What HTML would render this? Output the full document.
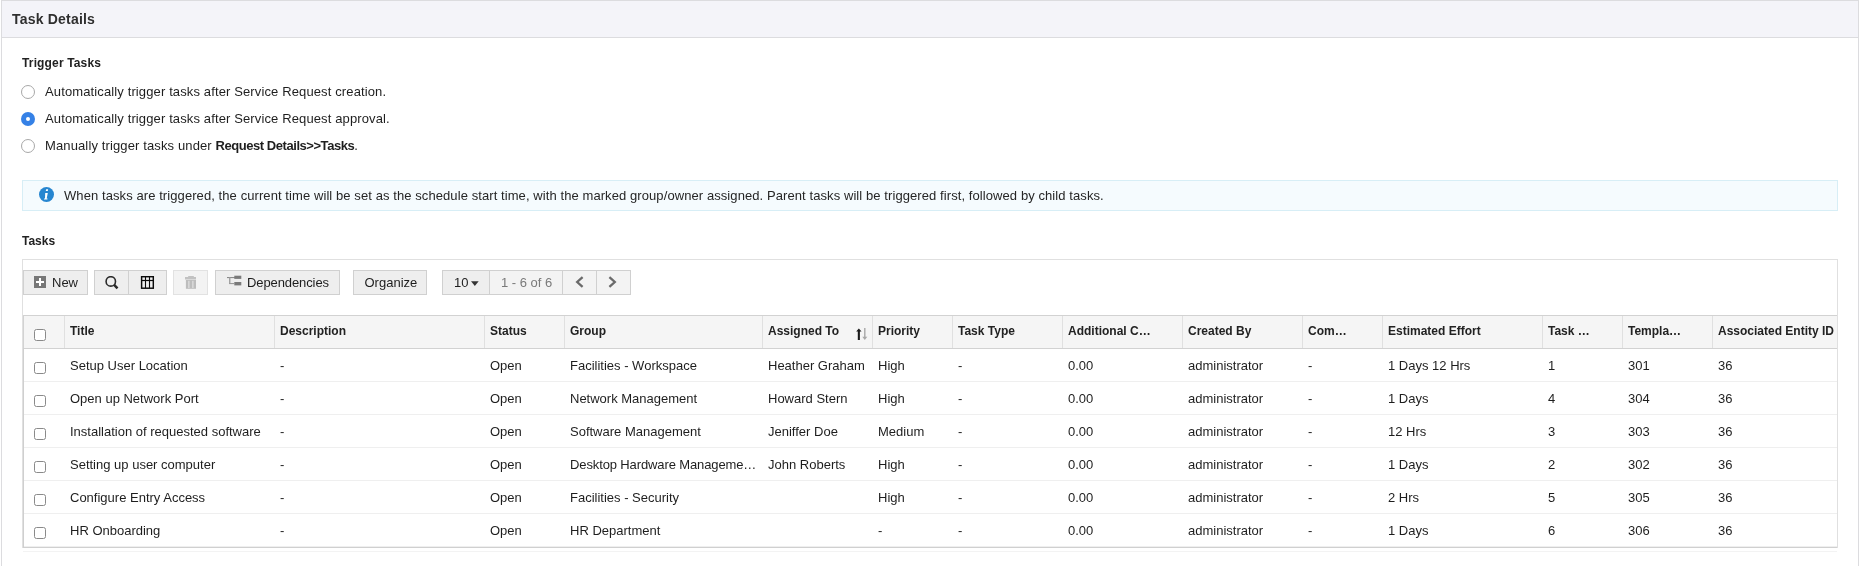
<!DOCTYPE html>
<html><head><meta charset="utf-8"><title>Task Details</title>
<style>
html,body{margin:0;padding:0;background:#fff;width:1859px;height:566px;overflow:hidden;position:relative}
body{font-family:"Liberation Sans", sans-serif;}
.t{position:absolute;white-space:nowrap;font-family:"Liberation Sans", sans-serif;}
</style></head><body>
<div id="w" style="position:absolute;left:0;top:0;width:1859px;height:566px;will-change:transform">
<div style="position:absolute;left:1px;top:0;width:1858px;height:600px;box-sizing:border-box;border:1px solid #dcdcdf;border-bottom:none;background:#fff"></div>
<div style="position:absolute;left:2px;top:1px;width:1856px;height:36px;background:#f4f4f9;border-bottom:1px solid #dcdcdf"></div>
<div class="t" style="left:12px;top:11.35px;font-size:14px;line-height:16px;color:#2f2f2f;font-weight:bold;letter-spacing:0.2px;">Task Details</div>
<div class="t" style="left:22px;top:54.84px;font-size:12px;line-height:16px;color:#222;font-weight:bold;letter-spacing:0.15px;">Trigger Tasks</div>
<div style="position:absolute;left:21px;top:85px;width:14px;height:14px;box-sizing:border-box;border-radius:50%;border:1px solid #a8a8a8;background:#fff"></div>
<div class="t" style="left:45px;top:83.70px;font-size:13px;line-height:16px;color:#1e1e1e;letter-spacing:0.125px;">Automatically trigger tasks after Service Request creation.</div>
<div style="position:absolute;left:21px;top:112px;width:14px;height:14px;border-radius:50%;background:#3581e6"></div>
<div style="position:absolute;left:26px;top:117px;width:4px;height:4px;border-radius:50%;background:#fff"></div>
<div class="t" style="left:45px;top:110.70px;font-size:13px;line-height:16px;color:#1e1e1e;letter-spacing:0.125px;">Automatically trigger tasks after Service Request approval.</div>
<div style="position:absolute;left:21px;top:139px;width:14px;height:14px;box-sizing:border-box;border-radius:50%;border:1px solid #a8a8a8;background:#fff"></div>
<div class="t" style="left:45px;top:137.70px;font-size:13px;line-height:16px;color:#1e1e1e;letter-spacing:0.125px;">Manually trigger tasks under <b style="letter-spacing:-0.45px">Request Details&gt;&gt;Tasks</b>.</div>
<div style="position:absolute;left:22px;top:180px;width:1816px;height:31px;box-sizing:border-box;background:#f5fbfe;border:1px solid #d7eef6"></div>
<svg style="position:absolute;left:39px;top:187px" width="15" height="15" viewBox="0 0 15 15"><circle cx="7.5" cy="7.5" r="7.5" fill="#2786d0"/><path d="M6.2 6.1 L8.8 6.1 L7.7 11.5 L8.6 11.5 L8.4 12.6 L4.9 12.6 L5.1 11.5 L6.0 11.5 Z" fill="#fff"/><path d="M7.1 2.2 H9.1 L8.8 4.1 H6.8 Z" fill="#fff"/></svg>
<div class="t" style="left:64px;top:187.70px;font-size:13px;line-height:16px;color:#262626;letter-spacing:0.083px;">When tasks are triggered, the current time will be set as the schedule start time, with the marked group/owner assigned. Parent tasks will be triggered first, followed by child tasks.</div>
<div class="t" style="left:22px;top:233.14px;font-size:12px;line-height:16px;color:#222;font-weight:bold;">Tasks</div>
<div style="position:absolute;left:22px;top:259px;width:1816px;height:289px;box-sizing:border-box;border:1px solid #e0e0e0;border-bottom:none"></div>
<div style="position:absolute;left:23px;top:270px;width:65px;height:25px;box-sizing:border-box;background:#eeeeee;border:1px solid #d0d0d0;"></div>
<div style="position:absolute;left:34px;top:276px;width:12px;height:12px;background:#777"></div>
<div style="position:absolute;left:38.75px;top:278px;width:2.5px;height:8px;background:#fff"></div>
<div style="position:absolute;left:36px;top:280.75px;width:8px;height:2.5px;background:#fff"></div>
<div class="t" style="left:52px;top:274.50px;font-size:13px;line-height:16px;color:#1e1e1e;">New</div>
<div style="position:absolute;left:94px;top:270px;width:35px;height:25px;box-sizing:border-box;background:#eeeeee;border:1px solid #d0d0d0;"></div>
<div style="position:absolute;left:128px;top:270px;width:39px;height:25px;box-sizing:border-box;background:#eeeeee;border:1px solid #d0d0d0;"></div>
<svg style="position:absolute;left:104px;top:276px" width="15" height="14" viewBox="0 0 15 14"><circle cx="6.8" cy="5.4" r="4.7" fill="none" stroke="#2a2a2a" stroke-width="1.6"/><line x1="9.9" y1="8.7" x2="13.5" y2="12.4" stroke="#2a2a2a" stroke-width="2.5" stroke-linecap="butt"/></svg>
<svg style="position:absolute;left:140px;top:276px" width="15" height="14" viewBox="0 0 15 14"><rect x="1.6" y="0.7" width="11.7" height="11.5" fill="none" stroke="#0a0a0a" stroke-width="1.45"/><line x1="1.7" y1="4.5" x2="13.2" y2="4.5" stroke="#0a0a0a" stroke-width="1.2"/><line x1="5.5" y1="0.8" x2="5.5" y2="12" stroke="#0a0a0a" stroke-width="1.1"/><line x1="9.5" y1="0.8" x2="9.5" y2="12" stroke="#0a0a0a" stroke-width="1.1"/></svg>
<div style="position:absolute;left:173px;top:270px;width:35px;height:25px;box-sizing:border-box;background:#f3f3f3;border:1px solid #e2e2e2;"></div>
<svg style="position:absolute;left:184px;top:275px" width="14" height="15" viewBox="0 0 14 15"><path d="M4 1.6 Q4 1 5 1 H9 Q10 1 10 1.6 V2 H12 V4.4 H1 V2 H4 Z" fill="#c2c2c2"/><rect x="1.9" y="5" width="10.1" height="8.8" fill="#bdbdbd"/><rect x="4.4" y="5.8" width="1" height="7.2" fill="#e8e8e8"/><rect x="8.4" y="5.8" width="1" height="7.2" fill="#e8e8e8"/></svg>
<div style="position:absolute;left:215px;top:270px;width:125px;height:25px;box-sizing:border-box;background:#eeeeee;border:1px solid #d0d0d0;"></div>
<svg style="position:absolute;left:227px;top:275px" width="15" height="12" viewBox="0 0 15 12"><rect x="0" y="2" width="8" height="1.1" fill="#8a8a8a"/><rect x="2.1" y="2" width="1.3" height="7" fill="#999"/><rect x="2.1" y="8" width="5" height="1.1" fill="#999"/><rect x="7.3" y="0.7" width="7" height="3.2" fill="#7a7a7a"/><rect x="7.3" y="7" width="7" height="3.4" fill="#7a7a7a"/></svg>
<div class="t" style="left:247px;top:274.50px;font-size:13px;line-height:16px;color:#1e1e1e;letter-spacing:-0.1px;">Dependencies</div>
<div style="position:absolute;left:353px;top:270px;width:74px;height:25px;box-sizing:border-box;background:#eeeeee;border:1px solid #d0d0d0;"></div>
<div class="t" style="left:364.5px;top:274.50px;font-size:13px;line-height:16px;color:#1e1e1e;">Organize</div>
<div style="position:absolute;left:442px;top:270px;width:48px;height:25px;box-sizing:border-box;background:#eeeeee;border:1px solid #d0d0d0;"></div>
<div class="t" style="left:454px;top:274.50px;font-size:13px;line-height:16px;color:#1e1e1e;">10</div>
<svg style="position:absolute;left:471px;top:281px" width="8" height="5" viewBox="0 0 8 5"><path d="M0 0.2 L7.7 0.2 L3.85 4.9 Z" fill="#333"/></svg>
<div style="position:absolute;left:489px;top:270px;width:74px;height:25px;box-sizing:border-box;background:#f3f3f3;border:1px solid #d0d0d0;"></div>
<div class="t" style="left:501px;top:274.50px;font-size:13px;line-height:16px;color:#7a7a7a;">1 - 6 of 6</div>
<div style="position:absolute;left:562px;top:270px;width:35px;height:25px;box-sizing:border-box;background:#f3f3f3;border:1px solid #d0d0d0;"></div>
<svg style="position:absolute;left:574px;top:276px" width="10" height="12" viewBox="0 0 10 12"><path d="M8.6 1.2 L3.2 6 L8.6 10.8" fill="none" stroke="#6a6a6a" stroke-width="2.3"/></svg>
<div style="position:absolute;left:596px;top:270px;width:35px;height:25px;box-sizing:border-box;background:#f3f3f3;border:1px solid #d0d0d0;"></div>
<svg style="position:absolute;left:608px;top:276px" width="10" height="12" viewBox="0 0 10 12"><path d="M1.4 1.2 L6.8 6 L1.4 10.8" fill="none" stroke="#6a6a6a" stroke-width="2.3"/></svg>
<div style="position:absolute;left:23px;top:315px;width:1814px;height:34px;box-sizing:border-box;background:#f5f5f5;border-top:1px solid #d2d2d2;border-bottom:1px solid #d2d2d2;border-left:1px solid #d2d2d2"></div>
<div style="position:absolute;left:64px;top:316px;width:1px;height:32px;background:#e0e0e0"></div>
<div style="position:absolute;left:274px;top:316px;width:1px;height:32px;background:#e0e0e0"></div>
<div style="position:absolute;left:484px;top:316px;width:1px;height:32px;background:#e0e0e0"></div>
<div style="position:absolute;left:564px;top:316px;width:1px;height:32px;background:#e0e0e0"></div>
<div style="position:absolute;left:762px;top:316px;width:1px;height:32px;background:#e0e0e0"></div>
<div style="position:absolute;left:872px;top:316px;width:1px;height:32px;background:#e0e0e0"></div>
<div style="position:absolute;left:952px;top:316px;width:1px;height:32px;background:#e0e0e0"></div>
<div style="position:absolute;left:1062px;top:316px;width:1px;height:32px;background:#e0e0e0"></div>
<div style="position:absolute;left:1182px;top:316px;width:1px;height:32px;background:#e0e0e0"></div>
<div style="position:absolute;left:1302px;top:316px;width:1px;height:32px;background:#e0e0e0"></div>
<div style="position:absolute;left:1382px;top:316px;width:1px;height:32px;background:#e0e0e0"></div>
<div style="position:absolute;left:1542px;top:316px;width:1px;height:32px;background:#e0e0e0"></div>
<div style="position:absolute;left:1622px;top:316px;width:1px;height:32px;background:#e0e0e0"></div>
<div style="position:absolute;left:1712px;top:316px;width:1px;height:32px;background:#e0e0e0"></div>
<div class="t" style="left:70px;top:322.64px;font-size:12px;line-height:16px;color:#222;font-weight:bold;">Title</div>
<div class="t" style="left:280px;top:322.64px;font-size:12px;line-height:16px;color:#222;font-weight:bold;">Description</div>
<div class="t" style="left:490px;top:322.64px;font-size:12px;line-height:16px;color:#222;font-weight:bold;">Status</div>
<div class="t" style="left:570px;top:322.64px;font-size:12px;line-height:16px;color:#222;font-weight:bold;">Group</div>
<div class="t" style="left:768px;top:322.64px;font-size:12px;line-height:16px;color:#222;font-weight:bold;">Assigned To</div>
<div class="t" style="left:878px;top:322.64px;font-size:12px;line-height:16px;color:#222;font-weight:bold;">Priority</div>
<div class="t" style="left:958px;top:322.64px;font-size:12px;line-height:16px;color:#222;font-weight:bold;">Task Type</div>
<div class="t" style="left:1068px;top:322.64px;font-size:12px;line-height:16px;color:#222;font-weight:bold;">Additional C…</div>
<div class="t" style="left:1188px;top:322.64px;font-size:12px;line-height:16px;color:#222;font-weight:bold;">Created By</div>
<div class="t" style="left:1308px;top:322.64px;font-size:12px;line-height:16px;color:#222;font-weight:bold;">Com…</div>
<div class="t" style="left:1388px;top:322.64px;font-size:12px;line-height:16px;color:#222;font-weight:bold;">Estimated Effort</div>
<div class="t" style="left:1548px;top:322.64px;font-size:12px;line-height:16px;color:#222;font-weight:bold;">Task …</div>
<div class="t" style="left:1628px;top:322.64px;font-size:12px;line-height:16px;color:#222;font-weight:bold;">Templa…</div>
<div class="t" style="left:1718px;top:322.64px;font-size:12px;line-height:16px;color:#222;font-weight:bold;">Associated Entity ID</div>
<svg style="position:absolute;left:855px;top:327px" width="14" height="14" viewBox="0 0 14 14"><rect x="2.8" y="3" width="2.1" height="10" fill="#1a1a1a"/><path d="M1.2 4.6 L3.85 1.5 L6.5 4.6 Z" fill="#1a1a1a"/><rect x="9.1" y="1" width="1.4" height="10" fill="#a8a8a8"/><path d="M7.3 9.8 L9.8 12.9 L12.3 9.8 Z" fill="#a8a8a8"/></svg>
<div style="position:absolute;left:34px;top:329px;width:12px;height:12px;box-sizing:border-box;border:1px solid #8a8a8a;border-radius:2.5px;background:#fff"></div>
<div style="position:absolute;left:23px;top:348px;width:1px;height:200px;background:#cfcfcf"></div>
<div style="position:absolute;left:24px;top:381px;width:1813px;height:1px;background:#efefef"></div>
<div style="position:absolute;left:34px;top:362px;width:12px;height:12px;box-sizing:border-box;border:1px solid #8a8a8a;border-radius:2.5px;background:#fff"></div>
<div class="t" style="left:70px;top:358.00px;font-size:13px;line-height:16px;color:#1e1e1e;">Setup User Location</div>
<div class="t" style="left:280px;top:358.00px;font-size:13px;line-height:16px;color:#1e1e1e;">-</div>
<div class="t" style="left:490px;top:358.00px;font-size:13px;line-height:16px;color:#1e1e1e;">Open</div>
<div class="t" style="left:570px;top:358.00px;font-size:13px;line-height:16px;color:#1e1e1e;">Facilities - Workspace</div>
<div class="t" style="left:768px;top:358.00px;font-size:13px;line-height:16px;color:#1e1e1e;">Heather Graham</div>
<div class="t" style="left:878px;top:358.00px;font-size:13px;line-height:16px;color:#1e1e1e;">High</div>
<div class="t" style="left:958px;top:358.00px;font-size:13px;line-height:16px;color:#1e1e1e;">-</div>
<div class="t" style="left:1068px;top:358.00px;font-size:13px;line-height:16px;color:#1e1e1e;">0.00</div>
<div class="t" style="left:1188px;top:358.00px;font-size:13px;line-height:16px;color:#1e1e1e;">administrator</div>
<div class="t" style="left:1308px;top:358.00px;font-size:13px;line-height:16px;color:#1e1e1e;">-</div>
<div class="t" style="left:1388px;top:358.00px;font-size:13px;line-height:16px;color:#1e1e1e;">1 Days 12 Hrs</div>
<div class="t" style="left:1548px;top:358.00px;font-size:13px;line-height:16px;color:#1e1e1e;">1</div>
<div class="t" style="left:1628px;top:358.00px;font-size:13px;line-height:16px;color:#1e1e1e;">301</div>
<div class="t" style="left:1718px;top:358.00px;font-size:13px;line-height:16px;color:#1e1e1e;">36</div>
<div style="position:absolute;left:24px;top:414px;width:1813px;height:1px;background:#efefef"></div>
<div style="position:absolute;left:34px;top:395px;width:12px;height:12px;box-sizing:border-box;border:1px solid #8a8a8a;border-radius:2.5px;background:#fff"></div>
<div class="t" style="left:70px;top:391.00px;font-size:13px;line-height:16px;color:#1e1e1e;">Open up Network Port</div>
<div class="t" style="left:280px;top:391.00px;font-size:13px;line-height:16px;color:#1e1e1e;">-</div>
<div class="t" style="left:490px;top:391.00px;font-size:13px;line-height:16px;color:#1e1e1e;">Open</div>
<div class="t" style="left:570px;top:391.00px;font-size:13px;line-height:16px;color:#1e1e1e;">Network Management</div>
<div class="t" style="left:768px;top:391.00px;font-size:13px;line-height:16px;color:#1e1e1e;">Howard Stern</div>
<div class="t" style="left:878px;top:391.00px;font-size:13px;line-height:16px;color:#1e1e1e;">High</div>
<div class="t" style="left:958px;top:391.00px;font-size:13px;line-height:16px;color:#1e1e1e;">-</div>
<div class="t" style="left:1068px;top:391.00px;font-size:13px;line-height:16px;color:#1e1e1e;">0.00</div>
<div class="t" style="left:1188px;top:391.00px;font-size:13px;line-height:16px;color:#1e1e1e;">administrator</div>
<div class="t" style="left:1308px;top:391.00px;font-size:13px;line-height:16px;color:#1e1e1e;">-</div>
<div class="t" style="left:1388px;top:391.00px;font-size:13px;line-height:16px;color:#1e1e1e;">1 Days</div>
<div class="t" style="left:1548px;top:391.00px;font-size:13px;line-height:16px;color:#1e1e1e;">4</div>
<div class="t" style="left:1628px;top:391.00px;font-size:13px;line-height:16px;color:#1e1e1e;">304</div>
<div class="t" style="left:1718px;top:391.00px;font-size:13px;line-height:16px;color:#1e1e1e;">36</div>
<div style="position:absolute;left:24px;top:447px;width:1813px;height:1px;background:#efefef"></div>
<div style="position:absolute;left:34px;top:428px;width:12px;height:12px;box-sizing:border-box;border:1px solid #8a8a8a;border-radius:2.5px;background:#fff"></div>
<div class="t" style="left:70px;top:424.00px;font-size:13px;line-height:16px;color:#1e1e1e;">Installation of requested software</div>
<div class="t" style="left:280px;top:424.00px;font-size:13px;line-height:16px;color:#1e1e1e;">-</div>
<div class="t" style="left:490px;top:424.00px;font-size:13px;line-height:16px;color:#1e1e1e;">Open</div>
<div class="t" style="left:570px;top:424.00px;font-size:13px;line-height:16px;color:#1e1e1e;">Software Management</div>
<div class="t" style="left:768px;top:424.00px;font-size:13px;line-height:16px;color:#1e1e1e;">Jeniffer Doe</div>
<div class="t" style="left:878px;top:424.00px;font-size:13px;line-height:16px;color:#1e1e1e;">Medium</div>
<div class="t" style="left:958px;top:424.00px;font-size:13px;line-height:16px;color:#1e1e1e;">-</div>
<div class="t" style="left:1068px;top:424.00px;font-size:13px;line-height:16px;color:#1e1e1e;">0.00</div>
<div class="t" style="left:1188px;top:424.00px;font-size:13px;line-height:16px;color:#1e1e1e;">administrator</div>
<div class="t" style="left:1308px;top:424.00px;font-size:13px;line-height:16px;color:#1e1e1e;">-</div>
<div class="t" style="left:1388px;top:424.00px;font-size:13px;line-height:16px;color:#1e1e1e;">12 Hrs</div>
<div class="t" style="left:1548px;top:424.00px;font-size:13px;line-height:16px;color:#1e1e1e;">3</div>
<div class="t" style="left:1628px;top:424.00px;font-size:13px;line-height:16px;color:#1e1e1e;">303</div>
<div class="t" style="left:1718px;top:424.00px;font-size:13px;line-height:16px;color:#1e1e1e;">36</div>
<div style="position:absolute;left:24px;top:480px;width:1813px;height:1px;background:#efefef"></div>
<div style="position:absolute;left:34px;top:461px;width:12px;height:12px;box-sizing:border-box;border:1px solid #8a8a8a;border-radius:2.5px;background:#fff"></div>
<div class="t" style="left:70px;top:457.00px;font-size:13px;line-height:16px;color:#1e1e1e;">Setting up user computer</div>
<div class="t" style="left:280px;top:457.00px;font-size:13px;line-height:16px;color:#1e1e1e;">-</div>
<div class="t" style="left:490px;top:457.00px;font-size:13px;line-height:16px;color:#1e1e1e;">Open</div>
<div class="t" style="left:570px;top:457.00px;font-size:13px;line-height:16px;color:#1e1e1e;letter-spacing:-0.12px;">Desktop Hardware Manageme…</div>
<div class="t" style="left:768px;top:457.00px;font-size:13px;line-height:16px;color:#1e1e1e;">John Roberts</div>
<div class="t" style="left:878px;top:457.00px;font-size:13px;line-height:16px;color:#1e1e1e;">High</div>
<div class="t" style="left:958px;top:457.00px;font-size:13px;line-height:16px;color:#1e1e1e;">-</div>
<div class="t" style="left:1068px;top:457.00px;font-size:13px;line-height:16px;color:#1e1e1e;">0.00</div>
<div class="t" style="left:1188px;top:457.00px;font-size:13px;line-height:16px;color:#1e1e1e;">administrator</div>
<div class="t" style="left:1308px;top:457.00px;font-size:13px;line-height:16px;color:#1e1e1e;">-</div>
<div class="t" style="left:1388px;top:457.00px;font-size:13px;line-height:16px;color:#1e1e1e;">1 Days</div>
<div class="t" style="left:1548px;top:457.00px;font-size:13px;line-height:16px;color:#1e1e1e;">2</div>
<div class="t" style="left:1628px;top:457.00px;font-size:13px;line-height:16px;color:#1e1e1e;">302</div>
<div class="t" style="left:1718px;top:457.00px;font-size:13px;line-height:16px;color:#1e1e1e;">36</div>
<div style="position:absolute;left:24px;top:513px;width:1813px;height:1px;background:#efefef"></div>
<div style="position:absolute;left:34px;top:494px;width:12px;height:12px;box-sizing:border-box;border:1px solid #8a8a8a;border-radius:2.5px;background:#fff"></div>
<div class="t" style="left:70px;top:490.00px;font-size:13px;line-height:16px;color:#1e1e1e;">Configure Entry Access</div>
<div class="t" style="left:280px;top:490.00px;font-size:13px;line-height:16px;color:#1e1e1e;">-</div>
<div class="t" style="left:490px;top:490.00px;font-size:13px;line-height:16px;color:#1e1e1e;">Open</div>
<div class="t" style="left:570px;top:490.00px;font-size:13px;line-height:16px;color:#1e1e1e;">Facilities - Security</div>
<div class="t" style="left:878px;top:490.00px;font-size:13px;line-height:16px;color:#1e1e1e;">High</div>
<div class="t" style="left:958px;top:490.00px;font-size:13px;line-height:16px;color:#1e1e1e;">-</div>
<div class="t" style="left:1068px;top:490.00px;font-size:13px;line-height:16px;color:#1e1e1e;">0.00</div>
<div class="t" style="left:1188px;top:490.00px;font-size:13px;line-height:16px;color:#1e1e1e;">administrator</div>
<div class="t" style="left:1308px;top:490.00px;font-size:13px;line-height:16px;color:#1e1e1e;">-</div>
<div class="t" style="left:1388px;top:490.00px;font-size:13px;line-height:16px;color:#1e1e1e;">2 Hrs</div>
<div class="t" style="left:1548px;top:490.00px;font-size:13px;line-height:16px;color:#1e1e1e;">5</div>
<div class="t" style="left:1628px;top:490.00px;font-size:13px;line-height:16px;color:#1e1e1e;">305</div>
<div class="t" style="left:1718px;top:490.00px;font-size:13px;line-height:16px;color:#1e1e1e;">36</div>
<div style="position:absolute;left:24px;top:546px;width:1813px;height:1px;background:#efefef"></div>
<div style="position:absolute;left:34px;top:527px;width:12px;height:12px;box-sizing:border-box;border:1px solid #8a8a8a;border-radius:2.5px;background:#fff"></div>
<div class="t" style="left:70px;top:523.00px;font-size:13px;line-height:16px;color:#1e1e1e;">HR Onboarding</div>
<div class="t" style="left:280px;top:523.00px;font-size:13px;line-height:16px;color:#1e1e1e;">-</div>
<div class="t" style="left:490px;top:523.00px;font-size:13px;line-height:16px;color:#1e1e1e;">Open</div>
<div class="t" style="left:570px;top:523.00px;font-size:13px;line-height:16px;color:#1e1e1e;">HR Department</div>
<div class="t" style="left:878px;top:523.00px;font-size:13px;line-height:16px;color:#1e1e1e;">-</div>
<div class="t" style="left:958px;top:523.00px;font-size:13px;line-height:16px;color:#1e1e1e;">-</div>
<div class="t" style="left:1068px;top:523.00px;font-size:13px;line-height:16px;color:#1e1e1e;">0.00</div>
<div class="t" style="left:1188px;top:523.00px;font-size:13px;line-height:16px;color:#1e1e1e;">administrator</div>
<div class="t" style="left:1308px;top:523.00px;font-size:13px;line-height:16px;color:#1e1e1e;">-</div>
<div class="t" style="left:1388px;top:523.00px;font-size:13px;line-height:16px;color:#1e1e1e;">1 Days</div>
<div class="t" style="left:1548px;top:523.00px;font-size:13px;line-height:16px;color:#1e1e1e;">6</div>
<div class="t" style="left:1628px;top:523.00px;font-size:13px;line-height:16px;color:#1e1e1e;">306</div>
<div class="t" style="left:1718px;top:523.00px;font-size:13px;line-height:16px;color:#1e1e1e;">36</div>
<div style="position:absolute;left:23px;top:547px;width:1814px;height:1px;background:#d0d0d0"></div>
<div style="position:absolute;left:23px;top:551px;width:1814px;height:1px;background:#f3f3f3"></div>
</div></body></html>
